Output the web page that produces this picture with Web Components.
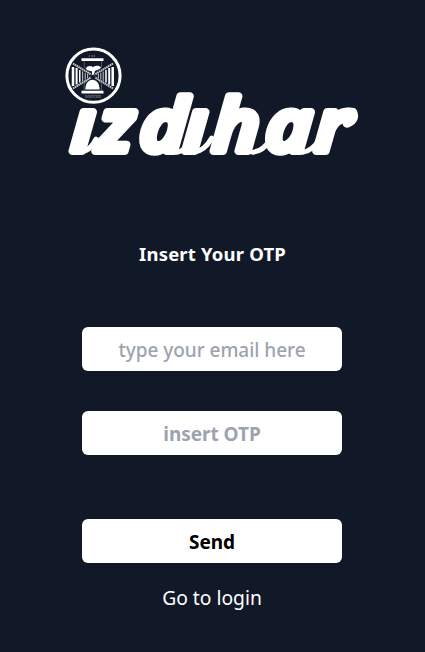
<!DOCTYPE html>
<html lang="en">
<head>
<meta charset="utf-8">
<title>Izdihar</title>
<style>
html,body{margin:0;height:100%;background:#111827}
body{font-family:"Noto Sans","Open Sans",sans-serif;color:#fff;overflow:hidden}
</style>
</head>
<body>
<otp-page></otp-page>
<script>
const define = (name, html) => customElements.define(name, class extends HTMLElement {
  constructor() {
    super();
    this.attachShadow({mode: 'open'}).innerHTML = html;
  }
});

define('brand-logo', `
<style>
:host{display:block;width:300px;height:120px}
svg{display:block;overflow:visible}
text{font-family:"Liberation Serif",serif}
.word{font-family:"Open Sans","Noto Sans",sans-serif;font-size:72px;font-weight:600;font-style:italic;fill:#fff;stroke:#fff;stroke-width:8;stroke-linejoin:round;stroke-linecap:round}
</style>
<svg width="300" height="120" viewBox="62 44 300 120">
  <g transform="translate(-1 0)">
  <g fill="none" stroke="#fff">
    <circle cx="93.500" cy="75.700" r="26.600" stroke-width="3"/>
    <path d="M81.500 59.600H103.500M81.500 92.100H103.500" stroke-width="2.700"/>
    <path d="M84.200 61V67L91.500 75L84.200 84V91M101.500 61V67L94 75L101.500 84V91" stroke-width=".5" opacity=".55"/>
    <path d="M73 63.500L91 74.500M73 88.500L91 77.500M113 63.500L95 74.500M113 88.500L95 77.500" stroke-width="2" stroke-dasharray="1.6 .5" opacity=".75"/>
    <path d="M73 67V86M112.700 67V86" stroke-width="2.500"/>
    <path d="M76.600 68V84.500M109.200 68V84.500" stroke-width="2"/>
    <path d="M79.800 70V82.500M106 70V82.500" stroke-width="1.500"/>
    <path d="M82.600 71.500V81M103.200 71.500V81M85.200 73V79.500M100.800 73V79.500M87.600 74V78M98.400 74V78" stroke-width="1.100" opacity=".7"/>
  </g>
  <path fill="#fff" d="M85.300 89.500C85.500 83 88.500 79.800 92.400 79.700C96.500 79.800 99.400 83 99.700 89.500ZM86 68.500C87 66 90 65.400 93 66.900C96 65.400 99.500 65.300 101 67.500C98.500 70.300 96 70 95 71L93.600 75L92.200 75L91.800 71.300C89.500 71 87 70.700 86 68.500Z"/>
  <text x="88.500" y="56.600" font-size="4.500" letter-spacing=".8" fill="#aeb3bd">est</text>
  <text x="85" y="97.600" font-size="4.200" textLength="16" fill="#8d939f">MMXXIII</text>
  </g>
  <g transform="translate(62 151.200) skewX(-3) scale(1.08 1)">
    <text class="word" y="0" x="7.500 31.500 70.500 111.500 138 187 233">ızdıhar</text>
    <path d="M16 1Q25 0 30 -12M106 1Q113 0 117 -11M121 1Q131 0 137 -13M176 1Q185 0 191 -11M222 1Q231 0 237 -12" fill="none" stroke="#fff" stroke-width="5" stroke-linecap="round"/>
    <path d="M266 -39Q269 -32 262 -28" fill="none" stroke="#fff" stroke-width="9" stroke-linecap="round"/>
  </g>
</svg>`);

define('page-title', `
<style>
:host{display:block;text-align:center}
h1{margin:0;font-size:18.500px;line-height:28px;font-weight:700;letter-spacing:.17px}
</style><h1><slot></slot></h1>`);

customElements.define('text-field', class extends HTMLElement {
  constructor() {
    super();
    this.attachShadow({mode: 'open'}).innerHTML = `
<style>
:host{display:block;width:260px;height:44px}
input{display:block;box-sizing:border-box;width:100%;height:100%;margin:0;border:0;border-radius:6px;padding:2px 8px 0;background:#fff;color:#000;text-align:center;font:500 19px/28px "Noto Sans","Open Sans",sans-serif;letter-spacing:-.04px;outline:0}
input::placeholder{color:#9ca3af;opacity:1}
:host([bold]) input{font-weight:700}
</style><input type="text">`;
    this.shadowRoot.querySelector('input').placeholder = this.getAttribute('placeholder');
  }
});

define('send-button', `
<style>
:host{display:block;width:260px;height:44px}
button{display:block;width:100%;height:100%;border:0;border-radius:6px;background:#fff;color:#000;font:700 19px/28px "Noto Sans","Open Sans",sans-serif;padding:2px 0 0}
</style><button><slot></slot></button>`);

define('login-link', `
<style>
:host{display:block;text-align:center}
a{color:#fff;text-decoration:none;font-size:19.300px;line-height:28px}
</style><a href="#"><slot></slot></a>`);

define('otp-page', `
<style>
:host{display:flex;flex-direction:column;align-items:center;box-sizing:border-box;height:652px;padding-top:44px;background:#111827}
page-title{margin-top:76px}
.form{display:flex;flex-direction:column;width:260px;margin:59px 1px 0 0}
.otp{margin-top:40px}
send-button{margin-top:64px}
login-link{margin-top:21px}
</style>
<brand-logo></brand-logo>
<page-title>Insert Your OTP</page-title>
<div class="form">
<text-field placeholder="type your email here"></text-field>
<text-field class="otp" bold placeholder="insert OTP"></text-field>
<send-button>Send</send-button>
<login-link>Go to login</login-link>
</div>`);
</script>
</body>
</html>
